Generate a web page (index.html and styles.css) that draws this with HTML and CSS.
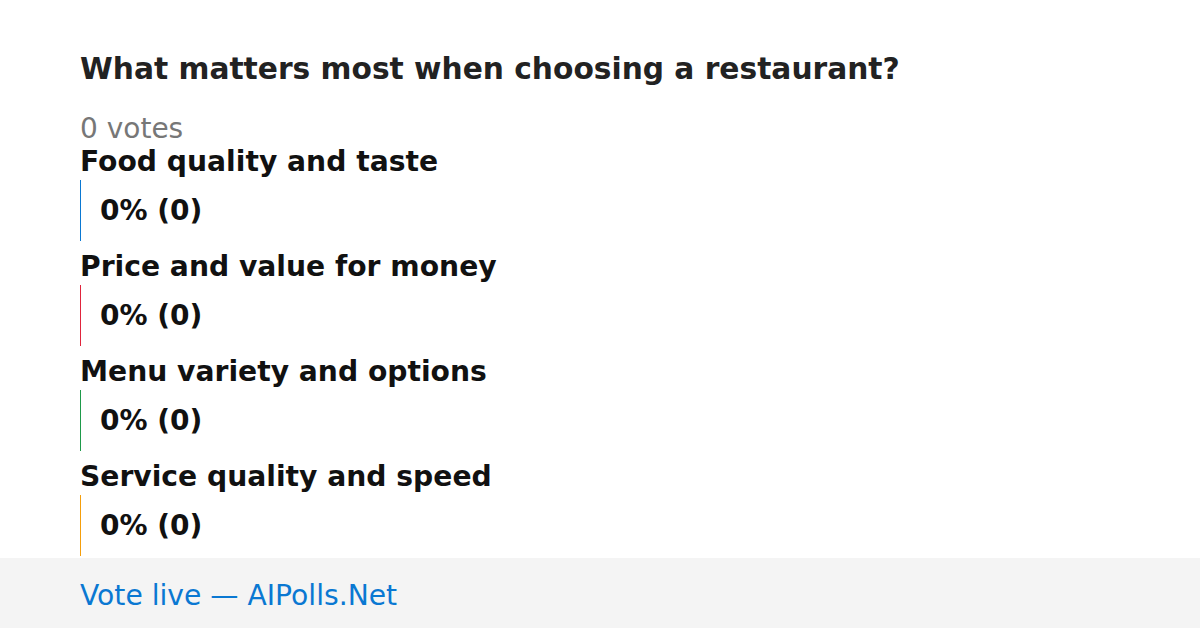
FILE: index.html
```html
<!DOCTYPE html>
<html>
<head>
<meta charset="utf-8">
<link rel="stylesheet" href="styles.css">
</head>
<body>
<div class="page">
  <main class="content">
    <h1 class="title">What matters most when choosing a restaurant?</h1>
    <div class="votes">0 votes</div>
    <div class="options">
      <div class="option">
        <div class="label">Food quality and taste</div>
        <div class="bar bar-blue"><span class="pct">0% (0)</span></div>
      </div>
      <div class="option">
        <div class="label">Price and value for money</div>
        <div class="bar bar-red"><span class="pct">0% (0)</span></div>
      </div>
      <div class="option">
        <div class="label">Menu variety and options</div>
        <div class="bar bar-green"><span class="pct">0% (0)</span></div>
      </div>
      <div class="option">
        <div class="label">Service quality and speed</div>
        <div class="bar bar-orange"><span class="pct">0% (0)</span></div>
      </div>
    </div>
  </main>
  <footer class="footer">Vote live — AIPolls.Net</footer>
</div>
</body>
</html>
```
FILE: styles.css
```css
html, body {
  margin: 0;
  padding: 0;
  background: #ffffff;
}
body {
  font-family: "DejaVu Sans", Verdana, sans-serif;
  width: 1200px;
  height: 628px;
  overflow: hidden;
}
.page {
  display: flex;
  flex-direction: column;
  height: 628px;
}
.content {
  flex: 1 1 auto;
  min-height: 0;
  overflow: hidden;
  padding: 51px 80px 0 80px;
  display: flex;
  flex-direction: column;
}
.title {
  margin: 0;
  font-size: 29.7px;
  font-weight: bold;
  color: #222222;
  line-height: 36px;
}
.votes {
  margin-top: 26px;
  font-size: 28px;
  color: #777777;
  line-height: 32px;
}
.options {
  display: flex;
  flex-direction: column;
  gap: 9px;
}
.option {
  display: flex;
  flex-direction: column;
}
.label {
  font-size: 28.2px;
  font-weight: bold;
  color: #111111;
  line-height: 34px;
}
.bar {
  height: 61px;
  border-left: 1px solid;
  padding-left: 19px;
  display: flex;
  align-items: center;
  margin-top: 1px;
}
.pct {
  font-size: 28px;
  font-weight: bold;
  color: #111111;
}
.bar-blue { border-color: #0a78d2; }
.bar-red { border-color: #e0243c; }
.bar-green { border-color: #1e9a4a; }
.bar-orange { border-color: #f59e0b; }
.footer {
  flex: 0 0 70px;
  box-sizing: border-box;
  background: #f4f4f4;
  color: #0a78d2;
  font-size: 28.2px;
  padding: 4px 80px 0 80px;
  display: flex;
  align-items: center;
}
```
